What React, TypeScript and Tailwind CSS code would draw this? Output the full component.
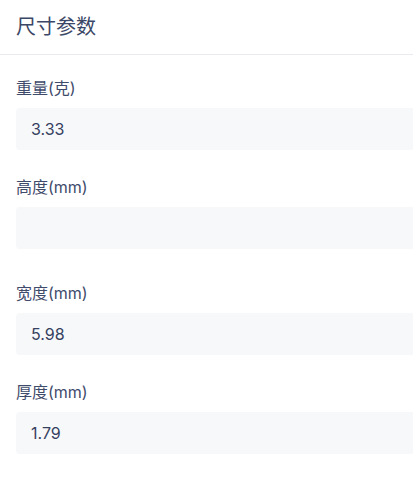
const fields = [
  { label: "重量(克)", value: "3.33" },
  { label: "高度(mm)", value: "" },
  { label: "宽度(mm)", value: "5.98" },
  { label: "厚度(mm)", value: "1.79" },
];

export default function App() {
  return (
    <div
      className="w-[413px] h-[477px] overflow-hidden bg-white"
      style={{ fontFamily: 'Inter, "Noto Sans CJK SC", sans-serif' }}
    >
      <div className="w-[440px]">
        {/* Header */}
        <div className="h-[55px] flex items-center px-4 border-b border-[#e8eaee]">
          <h2 className="text-[20px] text-[#3b4766] leading-none">尺寸参数</h2>
        </div>

        {/* Fields */}
        <div className="pl-4 pt-[22px]">
          {fields.map((f, i) => (
            <div key={f.label} className={i === 1 ? "mb-[33px]" : "mb-[26px]"}>
              <div className="h-[22px] flex items-center text-[16px] text-[#3f4b6b] mb-[9px]">
                {f.label}
              </div>
              <div className="h-[42px] rounded-[4px] bg-[#f7f8fa] flex items-center px-[15px] text-[16px] text-[#35415f]">
                {f.value}
              </div>
            </div>
          ))}
        </div>
      </div>
    </div>
  );
}
